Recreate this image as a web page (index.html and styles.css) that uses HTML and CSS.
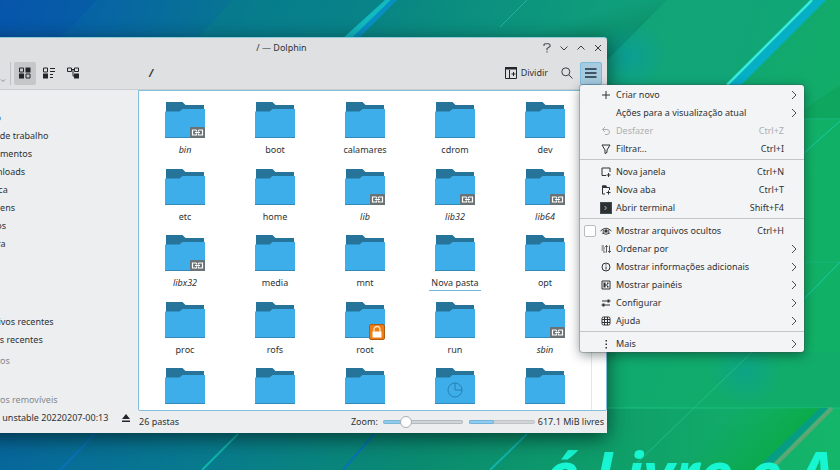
FILE: index.html
```html
<!DOCTYPE html>
<html lang="pt-BR">
<head>
<meta charset="utf-8">
<title>/ — Dolphin</title>
<link rel="stylesheet" href="styles.css">
</head>
<body>
<svg class="defs" aria-hidden="true">
  <symbol id="folder" viewBox="0 0 40 36">
    <path d="M1 0H17.500L20.500 3H39V18H1Z" fill="#27749b"/>
    <path d="M0 9.500H14.500L17.500 7H40V36H0Z" fill="#3daee9"/>
    <path d="M0 35H40V36H0Z" fill="#3389b8"/>
  </symbol>
  <symbol id="link" viewBox="0 0 15 11">
    <rect width="15" height="11" rx="1" fill="#6b7275"/>
    <path d="M6.500 3H2.500V8H6.500V6.500M8.500 3H12.500V8H8.500V6.500M6.500 3V4.500M8.500 3V4.500M5 5.500H10" fill="none" stroke="#fff" stroke-width="1.200"/>
  </symbol>
  <symbol id="lock" viewBox="0 0 16 16">
    <rect x=".5" y=".5" width="15" height="15" rx="1.500" fill="#ee7d14" stroke="#ad5c10"/>
    <path d="M5 8V5.500a3 3 0 0 1 6 0V8" fill="none" stroke="#ffe3bd" stroke-width="1.300"/>
    <rect x="3.500" y="7.500" width="9" height="6" fill="#fff"/>
  </symbol>
  <symbol id="chevron" viewBox="0 0 8 10"><path d="M2 1L6 5L2 9" fill="none" stroke="#4a4e51"/></symbol>
</svg>

<main class="desktop">
  <svg class="wallpaper" viewBox="0 0 840 470" preserveAspectRatio="xMidYMid slice" aria-hidden="true">
    <defs>
      <linearGradient id="base" x1="0" y1="0" x2="1" y2=".2">
        <stop offset="0" stop-color="#0757ad"/><stop offset=".12" stop-color="#0765a4"/>
        <stop offset=".3" stop-color="#07788f"/><stop offset=".5" stop-color="#0a8b80"/>
        <stop offset=".75" stop-color="#10a27a"/><stop offset="1" stop-color="#12ad68"/>
      </linearGradient>
      <linearGradient id="edge" x1="0" y1="0" x2="1" y2="1">
        <stop offset=".4" stop-color="#087a5c" stop-opacity="0"/><stop offset=".8" stop-color="#087a4c"/>
      </linearGradient>
      <linearGradient id="low"><stop offset="0" stop-color="#07679c"/><stop offset=".25" stop-color="#087b8d"/><stop offset=".5" stop-color="#0a8b70"/><stop offset=".75" stop-color="#0fa069"/><stop offset="1" stop-color="#14b76a"/></linearGradient>
      <linearGradient id="band" gradientUnits="userSpaceOnUse" x1="735" y1="400" x2="790" y2="450"><stop offset="0" stop-color="#07a747" stop-opacity="0"/><stop offset="1" stop-color="#07a73a"/></linearGradient>
      <radialGradient id="glow"><stop offset="0" stop-color="#0799a9" stop-opacity=".55"/><stop offset="1" stop-color="#0799a9" stop-opacity="0"/></radialGradient>
    </defs>
    <rect width="840" height="470" fill="url(#base)"/>
    <path d="M0 0H97L60 39H0Z" fill="#0653a9" opacity=".35"/>
    <path d="M233 0H385L343 40H195Z" fill="#09828a" opacity=".45"/>
    <path d="M530 0H667L607 62V40H490Z" fill="url(#edge)" opacity=".65"/>
    <path d="M667 0H812L727 85H607V60Z" fill="#12a578" opacity=".8"/>
    <ellipse cx="628" cy="56" rx="40" ry="34" fill="url(#glow)"/>
    <path d="M385 0H391L350 40H341Z" fill="#12b9c1"/>
    <path d="M391 0H397L357 40H350Z" fill="#078fc4"/>
    <path d="M527 0L500 27" stroke="#25b3a0"/>
    <path d="M814 0H826L741 85H729Z" fill="#06afc6"/>
    <path d="M812 0L727 85" stroke="#36ece2" stroke-width="2.500"/>
    <path d="M840 85V118H803V110Z" fill="#0c9f55" opacity=".5"/>
    <path d="M607 352H840V118H803V300Z" fill="#10b368" opacity=".6"/>
    <path d="M800 119H840M804 262H840" stroke="#1cb98c" opacity=".6"/>
    <path d="M840 121L803 154M840 262L804 299" stroke="#18cba9"/>
    <path d="M607 352H840V408H607Z" fill="#10ab6c" opacity=".6"/>
    <rect y="408" width="840" height="62" fill="url(#low)"/>
    <ellipse cx="745" cy="372" rx="38" ry="34" fill="url(#glow)" opacity=".8"/>
    <path d="M607 408H840M752 352L635 465" stroke="#20c68b" opacity=".8"/>
    <path d="M740 408H826L764 470H680Z" fill="url(#band)" opacity=".75"/>
    <path d="M820 408H828L766 470H755Z" fill="#079d84"/>
    <path d="M832 408L770 470" stroke="#5ba776" stroke-width="4"/>
    <path d="M238 434L202 470M527 434L490 470" stroke="#10b5ac" stroke-width="2"/>
    <path d="M95 434L60 470M374 434L343 470" stroke="#0872b8" stroke-width="2"/>
    <text class="slogan" x="545" y="496">é Livre e A</text>
  </svg>

  <section class="window">
    <header class="titlebar">
      <h1 class="title">/ — Dolphin</h1>
      <div class="window-buttons">
        <button class="plain" aria-label="Ajuda da janela"><svg width="10" height="10" viewBox="0 0 10 10"><path d="M2 3V1.500L3 .7H6.800L8 1.700V3.500L5 5.500V7.200" fill="none" stroke="#4a4e51" stroke-width="1.100"/><path d="M4.400 8.300H5.600V9.500H4.400Z" fill="#4a4e51"/></svg></button>
        <button class="plain" aria-label="Minimizar"><svg width="10" height="10" viewBox="0 0 10 10"><path d="M1.500 3.500L5 7L8.500 3.500" fill="none" stroke="#3a3e41"/></svg></button>
        <button class="plain" aria-label="Maximizar"><svg width="10" height="10" viewBox="0 0 10 10"><path d="M1.500 6.500L5 3L8.500 6.500" fill="none" stroke="#3a3e41"/></svg></button>
        <button class="plain" aria-label="Fechar"><svg width="10" height="10" viewBox="0 0 10 10"><path d="M2 2L8 8M8 2L2 8" fill="none" stroke="#3a3e41"/></svg></button>
      </div>
    </header>

    <nav class="toolbar">
      <svg class="drop-hint" width="6" height="4" viewBox="0 0 6 4"><path d="M1 .5L3 2.500L5 .5" fill="none" stroke="#8b9093"/></svg>
      <span class="divider"></span>
      <button class="tool pressed" aria-label="Ícones"><svg width="12" height="12" viewBox="0 0 12 12"><path d="M.5 1H4.500V5H.5ZM7 7H11V11H7Z" fill="none" stroke="#232629"/><path d="M6.500 .5H11.500V5.500H6.500ZM0 6.500H5V11.500H0Z" fill="#232629"/></svg></button>
      <button class="tool" aria-label="Compacto"><svg width="12" height="12" viewBox="0 0 12 12"><path d="M.5 1H4.500V5H.5ZM7 1.500H12M7 4.500H12M7 7.500H10M7 10.500H10" fill="none" stroke="#232629"/><path d="M0 6.500H5V11.500H0Z" fill="#232629"/></svg></button>
      <button class="tool" aria-label="Detalhes"><svg width="12" height="12" viewBox="0 0 12 12"><path d="M.5 1H4.500V4.500H.5ZM7.500 1H11.500V4.500H7.500ZM4.500 2.500H7.500M6 2.500V9H8" fill="none" stroke="#232629"/><path d="M7 6.500H12V11.500H7Z" fill="#232629"/></svg></button>
      <strong class="path">/</strong>
      <button class="split"><svg width="12" height="12" viewBox="0 0 12 12"><path d="M.5 .5H11.500V11.500H.5ZM4.500 3V11.500M6.500 7H10.500M8.500 5V9" fill="none" stroke="#232629"/><path d="M0 0H12V2.500H0Z" fill="#232629"/></svg>Dividir</button>
      <button class="tool search" aria-label="Pesquisar"><svg width="12" height="12" viewBox="0 0 12 12"><circle cx="4.800" cy="4.800" r="4" fill="none" stroke="#3a3e41"/><path d="M7.800 7.800L11.500 11.500" stroke="#3a3e41"/></svg></button>
      <button class="tool active" aria-label="Menu"><svg width="12" height="12" viewBox="0 0 12 12"><path d="M0 2H11.500M0 6H11.500M0 10H11.500" stroke="#20303a" stroke-width="1.600"/></svg></button>
    </nav>

    <div class="content">
      <aside class="sidebar">
        <ul class="places">
          <li>Início</li><li>Área de trabalho</li><li>Documentos</li><li>Downloads</li><li>Música</li><li>Imagens</li><li>Vídeos</li><li>Lixeira</li>
        </ul>
        <ul class="places recent"><li>Arquivos recentes</li><li>Locais recentes</li></ul>
        <h2 class="group">Dispositivos</h2>
        <h2 class="group removable">Dispositivos removíveis</h2>
        <div class="device"><span>Neon unstable 20220207-00:13</span>
          <button class="plain" aria-label="Ejetar"><svg width="10" height="10" viewBox="0 0 10 10"><path d="M5 1L9 6H1ZM1 7.500H9V9H1Z" fill="#232629"/></svg></button>
        </div>
      </aside>

      <div class="pane">
        <div class="view">
          <ul class="files">
            <li class="file linked"><span class="icon"><svg><use href="#folder"/></svg><svg class="badge"><use href="#link"/></svg></span><span class="name">bin</span></li>
            <li class="file"><span class="icon"><svg><use href="#folder"/></svg></span><span class="name">boot</span></li>
            <li class="file"><span class="icon"><svg><use href="#folder"/></svg></span><span class="name">calamares</span></li>
            <li class="file"><span class="icon"><svg><use href="#folder"/></svg></span><span class="name">cdrom</span></li>
            <li class="file"><span class="icon"><svg><use href="#folder"/></svg></span><span class="name">dev</span></li>
            <li class="file"><span class="icon"><svg><use href="#folder"/></svg></span><span class="name">etc</span></li>
            <li class="file"><span class="icon"><svg><use href="#folder"/></svg></span><span class="name">home</span></li>
            <li class="file linked"><span class="icon"><svg><use href="#folder"/></svg><svg class="badge"><use href="#link"/></svg></span><span class="name">lib</span></li>
            <li class="file linked"><span class="icon"><svg><use href="#folder"/></svg><svg class="badge"><use href="#link"/></svg></span><span class="name">lib32</span></li>
            <li class="file linked"><span class="icon"><svg><use href="#folder"/></svg><svg class="badge"><use href="#link"/></svg></span><span class="name">lib64</span></li>
            <li class="file linked"><span class="icon"><svg><use href="#folder"/></svg><svg class="badge"><use href="#link"/></svg></span><span class="name">libx32</span></li>
            <li class="file"><span class="icon"><svg><use href="#folder"/></svg></span><span class="name">media</span></li>
            <li class="file"><span class="icon"><svg><use href="#folder"/></svg></span><span class="name">mnt</span></li>
            <li class="file current"><span class="icon"><svg><use href="#folder"/></svg></span><span class="name">Nova pasta</span></li>
            <li class="file"><span class="icon"><svg><use href="#folder"/></svg></span><span class="name">opt</span></li>
            <li class="file"><span class="icon"><svg><use href="#folder"/></svg></span><span class="name">proc</span></li>
            <li class="file"><span class="icon"><svg><use href="#folder"/></svg></span><span class="name">rofs</span></li>
            <li class="file"><span class="icon"><svg><use href="#folder"/></svg><svg class="badge locked"><use href="#lock"/></svg></span><span class="name">root</span></li>
            <li class="file"><span class="icon"><svg><use href="#folder"/></svg></span><span class="name">run</span></li>
            <li class="file linked"><span class="icon"><svg><use href="#folder"/></svg><svg class="badge"><use href="#link"/></svg></span><span class="name">sbin</span></li>
            <li class="file"><span class="icon"><svg><use href="#folder"/></svg></span></li>
            <li class="file"><span class="icon"><svg><use href="#folder"/></svg></span></li>
            <li class="file"><span class="icon"><svg><use href="#folder"/></svg></span></li>
            <li class="file"><span class="icon"><svg viewBox="0 0 40 36"><use href="#folder" width="40" height="36"/><path d="M20 15V22H27M27 22A7 7 0 1 1 20 15A7 7 0 0 1 27 22" fill="none" stroke="#2480b4"/></svg></span></li>
            <li class="file"><span class="icon"><svg><use href="#folder"/></svg></span></li>
          </ul>
          <div class="scroll-gutter"></div>
        </div>
        <footer class="status">
          <span class="count">26 pastas</span>
          <label for="zoom">Zoom:</label>
          <input id="zoom" class="zoom" type="range" min="0" max="100" value="25">
          <progress class="capacity" max="100" value="38" aria-label="Espaço em disco"></progress>
          <span class="free">617.1 MiB livres</span>
        </footer>
      </div>
    </div>
  </section>

  <div class="menu" role="menu">
    <button class="item" role="menuitem"><svg class="glyph" viewBox="0 0 12 12"><path d="M6 2V10M2 6H10"/></svg><span>Criar novo</span><svg class="more"><use href="#chevron"/></svg></button>
    <button class="item" role="menuitem"><span>Ações para a visualização atual</span><svg class="more"><use href="#chevron"/></svg></button>
    <button class="item" role="menuitem" disabled><svg class="glyph" viewBox="0 0 12 12"><path d="M5 2L2.500 4.500L5 7M2.500 4.500H7A2.500 2.500 0 0 1 7 9.500H5"/></svg><span>Desfazer</span><kbd>Ctrl+Z</kbd></button>
    <button class="item" role="menuitem"><svg class="glyph" viewBox="0 0 12 12"><path d="M2 2H10L7 7V9.500L5 10.500V7Z"/></svg><span>Filtrar...</span><kbd>Ctrl+I</kbd></button>
    <hr>
    <button class="item" role="menuitem"><svg class="glyph" viewBox="0 0 12 12"><path d="M6 9.500H2V2H10V6M8.500 7V11M6.500 9H10.500"/></svg><span>Nova janela</span><kbd>Ctrl+N</kbd></button>
    <button class="item" role="menuitem"><svg class="glyph" viewBox="0 0 12 12"><path d="M5 10H2.500V2H6V3.500H9.500V6M8.500 6.500V10.500M6.500 8.500H10.500"/><path d="M2 1.500H6.500V4H2Z" class="solid"/></svg><span>Nova aba</span><kbd>Ctrl+T</kbd></button>
    <button class="item" role="menuitem"><svg class="glyph" viewBox="0 0 12 12"><rect x=".5" y=".5" width="11" height="11" fill="#2b3033" stroke="#454b4f"/><path d="M4.500 4L6.500 6L4.500 8" stroke="#b6babc"/></svg><span>Abrir terminal</span><kbd>Shift+F4</kbd></button>
    <hr>
    <label class="item"><input class="check" type="checkbox"><svg class="glyph" viewBox="0 0 12 12"><path d="M.5 6Q6 .5 11.500 6M2 8Q6 10.500 10 8" stroke-width=".9"/><circle cx="6" cy="6" r="1.700" class="solid"/><path d="M3.300 4.500Q2.800 6.500 4 8M8.700 4.500Q9.200 6.500 8 8" stroke-width=".9"/></svg><span>Mostrar arquivos ocultos</span><kbd>Ctrl+H</kbd></label>
    <button class="item" role="menuitem"><svg class="glyph" viewBox="0 0 12 12"><path d="M1.500 3H4M1.500 5H5M1.500 7H4.500M3 9H5.500M6.500 9.500V2.500M5.200 4L6.500 2.500L7.800 4M9.500 2.500V9.500M8 8L9.500 9.500L11 8" stroke-width=".8"/></svg><span>Ordenar por</span><svg class="more"><use href="#chevron"/></svg></button>
    <button class="item" role="menuitem"><svg class="glyph" viewBox="0 0 12 12"><circle cx="6" cy="6" r="4"/><path d="M6 5.500V8.500M6 3.300V4.500"/></svg><span>Mostrar informações adicionais</span><svg class="more"><use href="#chevron"/></svg></button>
    <button class="item" role="menuitem"><svg class="glyph" viewBox="0 0 12 12"><path d="M2 2H10V10H2Z"/><path d="M3.500 3.500H5.500V8.500H3.500ZM7 3.500H8.500V5H7ZM7 7H8.500V8.500H7Z" class="solid"/><path d="M5 6H8"/></svg><span>Mostrar painéis</span><svg class="more"><use href="#chevron"/></svg></button>
    <button class="item" role="menuitem"><svg class="glyph" viewBox="0 0 12 12"><path d="M2 4H10.500M1.500 8H10"/><path d="M7.500 2.500H9.500V5.500H7.500ZM2.500 6.500H4.500V9.500H2.500Z" class="solid"/></svg><span>Configurar</span><svg class="more"><use href="#chevron"/></svg></button>
    <button class="item" role="menuitem"><svg class="glyph" viewBox="0 0 12 12"><rect x="2" y="2" width="8" height="8" rx="1.500"/><rect x="4.500" y="4.500" width="3" height="3"/><path d="M4.500 2V4.500H2M7.500 2V4.500H10M2 7.500H4.500V10M10 7.500H7.500V10"/></svg><span>Ajuda</span><svg class="more"><use href="#chevron"/></svg></button>
    <hr>
    <button class="item" role="menuitem"><svg class="glyph" viewBox="0 0 12 12"><path d="M5.500 2H7V3.500H5.500ZM5.500 5.500H7V7H5.500ZM5.500 9H7V10.500H5.500Z" class="solid"/></svg><span>Mais</span><svg class="more"><use href="#chevron"/></svg></button>
  </div>
</main>
</body>
</html>
```
FILE: styles.css
```css
* { box-sizing: border-box; }

body {
  margin: 0;
  font: 9px/14px "Noto Sans", "Open Sans", sans-serif;
  color: #2e3235;
}

button, input { margin: 0; padding: 0; border: 0; background: none; font: inherit; color: inherit; }
ul { list-style: none; margin: 0; padding: 0; }
h1, h2 { margin: 0; font: inherit; }
svg { display: block; flex: none; }

.defs { position: absolute; width: 0; height: 0; }

.desktop { position: relative; height: 100vh; overflow: hidden; background: #0a8b80; }
.wallpaper { width: 100%; height: 100%; }
.slogan { font: italic 700 60px "Open Sans", "Noto Sans", sans-serif; fill: #17f5d2; }

.window {
  position: absolute;
  left: -60px;
  top: 37px;
  width: 667px;
  display: flex;
  flex-direction: column;
  background: #dee0e2;
  border-top: 1px solid #8dcbd8;
  border-radius: 3px 3px 0 0;
  box-shadow: 0 5px 20px rgba(0, 20, 20, .65);
}

.titlebar {
  display: grid;
  grid-template-columns: 1fr auto 1fr;
  align-items: center;
  height: 19px;
  padding-right: 4px;
}
.title { grid-column: 2; padding-left: 20px; }
.window-buttons { display: flex; justify-content: flex-end; gap: 7px; }
.plain { display: flex; }

.toolbar { display: flex; align-items: center; height: 32px; padding: 0 5px 0 60px; }
.drop-hint { align-self: flex-end; margin: 0 4px 6px 0; }
.divider { width: 1px; height: 23px; background: #bfc2c4; margin-right: 3px; }
.tool { display: grid; place-items: center; width: 22px; height: 23px; margin-right: 2px; border-radius: 2px; }
.pressed { background: #c5c7c9; }
.path { margin: 0 auto 0 63px; font-size: 10px; font-style: italic; }
.split { display: flex; align-items: center; gap: 4px; margin-right: 8px; }
.tool.active { margin-right: 0; background: #a6cbe0; border: 1px solid #7bbbdc; }

.content { display: flex; background: #eceef0; border-top: 1px solid #c9cdd0; }

.sidebar { flex: none; width: 198px; padding-top: 19px; }
.places { padding-left: 38px; line-height: 18px; }
.recent { padding-top: 60px; }
.group { padding: 5px 0 0 19px; line-height: 14px; color: #85898c; }
.removable { padding-top: 25px; }
.device { display: flex; align-items: center; justify-content: space-between; height: 22px; padding: 0 7px 0 37px; white-space: nowrap; }

.pane { flex: 1; min-width: 0; }
.view { display: flex; height: 321px; background: #fff; border: 1px solid #82bfd9; border-radius: 0 0 2px 2px; overflow: hidden; }
.files { flex: 1; display: grid; grid-template-columns: repeat(5, 90px); grid-template-rows: repeat(5, 1fr); height: 333px; padding-left: 1px; }
.scroll-gutter { width: 15px; border-left: 1px solid #e4e6e8; }
.file { display: flex; flex-direction: column; align-items: center; gap: 5px; padding-top: 11px; min-height: 0; }
.icon { position: relative; }
.icon svg { width: 40px; height: 36px; }
.icon .badge { position: absolute; right: 0; bottom: 0; width: 15px; height: 11px; }
.icon .locked { right: 0; bottom: -2px; width: 16px; height: 16px; }
.linked .name { font-style: italic; }
.current .name { padding: 0 2px; border-bottom: 1px solid #6fb8dc; }

.status { display: flex; align-items: center; height: 22px; padding: 0 3px 0 1px; white-space: nowrap; }
.count { margin-right: auto; }
.zoom { appearance: none; width: 80px; height: 12px; margin: 0 6px 0 5px; }
.zoom::-webkit-slider-runnable-track {
  height: 4px;
  border-radius: 2px;
  background: linear-gradient(90deg, #8ccdf0 27%, #d2d4d6 27%);
  box-shadow: inset 0 0 0 1px rgba(80, 110, 130, .25);
}
.zoom::-webkit-slider-thumb {
  appearance: none;
  width: 12px;
  height: 12px;
  margin-top: -4px;
  border: 1px solid #a9adb0;
  border-radius: 50%;
  background: #fff;
}
.capacity { appearance: none; width: 66px; height: 4px; margin-right: 3px; border: 0; }
.capacity::-webkit-progress-bar { border-radius: 2px; background: #d2d4d6; box-shadow: inset 0 0 0 1px rgba(80, 110, 130, .15); }
.capacity::-webkit-progress-value { border-radius: 2px; background: #8ccdf0; box-shadow: inset 0 0 0 1px #72b2d6; }

.menu {
  position: absolute;
  left: 580px;
  top: 85px;
  width: 224px;
  background: #f3f4f5;
  border-radius: 3px;
  box-shadow: 0 0 0 1px rgba(70, 80, 85, .3), 0 3px 12px rgba(0, 20, 20, .45);
}
.menu hr { height: 1px; margin: 2px 0; border: 0; background: #c3c5c7; }
.item {
  display: grid;
  grid-template-columns: 12px 12px 1fr auto 8px;
  column-gap: 4px;
  align-items: center;
  width: 100%;
  height: 18px;
  padding: 1px 6px 0 4px;
  text-align: left;
  white-space: nowrap;
}
.item span { grid-column: 3; grid-row: 1; }
.item kbd { grid-column: 4; grid-row: 1; font: inherit; padding-right: 2px; }
.item:disabled { color: #acafb1; }
.more { grid-column: 5; grid-row: 1; width: 8px; height: 10px; }
.glyph { grid-column: 2; grid-row: 1; width: 12px; height: 12px; fill: none; stroke: currentColor; }
.solid { fill: currentColor; stroke: none; }
.check { grid-column: 1; grid-row: 1; appearance: none; width: 12px; height: 12px; border: 1px solid #b9bcbe; border-radius: 2px; background: #fff; }
```
